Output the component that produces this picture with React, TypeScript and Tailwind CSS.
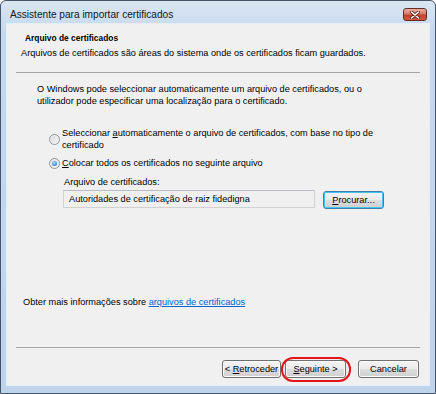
import React from "react";

const Radio = ({ checked }: { checked?: boolean }) => (
  <div className="w-[11px] h-[11px] rounded-full border border-[#8e9296] bg-[linear-gradient(135deg,#d4d6d8,#f7f7f7)] flex items-center justify-center shrink-0 shadow-[inset_0_0_0_1px_#f4f4f4]">
    {checked && (
      <div className="w-[5px] h-[5px] rounded-full bg-[radial-gradient(circle_at_40%_35%,#a8ddfb,#1b5fae)]" />
    )}
  </div>
);

const Btn = ({
  children,
  w,
  focused,
}: {
  children: React.ReactNode;
  w: string;
  focused?: boolean;
}) => (
  <div
    className={
      "h-[18px] rounded-[3px] border flex items-center justify-center bg-[linear-gradient(#f3f3f3_0%,#ebebeb_48%,#dddddd_52%,#cfcfcf_100%)] " +
      w +
      (focused
        ? " border-[#3c7fb1] shadow-[inset_0_0_0_1px_#48c4f4]"
        : " border-[#707070] shadow-[inset_0_0_0_1px_#fcfcfc]")
    }
  >
    {children}
  </div>
);

export default function App() {
  return (
    <div
      className="w-[436px] h-[394px] border border-[#46566a] rounded-t-[6px] bg-[linear-gradient(#dae6f4_0%,#c6d8ee_8%,#bed3ec_100%)] flex flex-col text-black"
      style={{ fontFamily: '"Liberation Sans", Arial, sans-serif' }}
    >
      {/* Title bar */}
      <div className="h-[23px] flex items-start justify-between">
        <div className="pl-[9px] pt-[8px] text-[10.1px] leading-[12px] text-[#101820]">
          Assistente para importar certificados
        </div>
        <div className="mt-[7px] mr-[8px] w-[24px] h-[13px] rounded-[3px] border border-[#6b2b22] bg-[linear-gradient(#eab1a4_0%,#d97a66_45%,#c4412c_55%,#cf5b40_100%)] flex items-center justify-center">
          <svg width="10" height="8" viewBox="0 0 10 8">
            <path
              d="M1.5 1 L8.5 7 M8.5 1 L1.5 7"
              stroke="#5a1d16"
              strokeWidth="3"
              strokeLinecap="round"
            />
            <path
              d="M1.5 1 L8.5 7 M8.5 1 L1.5 7"
              stroke="#ffffff"
              strokeWidth="1.6"
              strokeLinecap="round"
            />
          </svg>
        </div>
      </div>

      {/* Client area */}
      <div className="px-[6px] pb-[8px]">
        <div className="w-[422px] h-[361px] bg-[#f0f0f0] shadow-[0_0_0_1px_#e6eef8] flex flex-col text-[9.2px] leading-[12px]">
          <div className="pl-[18px] pt-[8px] font-bold text-[8.4px] leading-[12px]">
            Arquivo de certificados
          </div>
          <div className="pl-[14px] mt-[3px]">
            Arquivos de certificados são áreas do sistema onde os certificados
            ficam guardados.
          </div>
          <div className="mx-[9px] mt-[13px] h-px bg-[#a3a3a3]" />

          <div className="pl-[30px] mt-[10px]">
            O Windows pode seleccionar automaticamente um arquivo de
            certificados, ou o<br />
            utilizador pode especificar uma localização para o certificado.
          </div>

          <div className="pl-[42px] mt-[20px] flex flex-col">
            <div className="flex items-center gap-[2px]">
              <Radio />
              <div>
                Seleccionar <span className="underline">a</span>utomaticamente
                o arquivo de certificados, com base no tipo de
                <br />
                certificado
              </div>
            </div>
            <div className="flex items-center gap-[2px] mt-[6px]">
              <Radio checked />
              <div>
                <span className="underline">C</span>olocar todos os
                certificados no seguinte arquivo
              </div>
            </div>
            <div className="ml-[15px] mt-[7px]">Arquivo de certificados:</div>
            <div className="ml-[14px] mt-[2px] flex items-start gap-[8px]">
              <div className="w-[252px] h-[18px] border border-[#cfd1d4] border-t-[#b9bcc0] bg-[#f0f0f0] flex items-center pl-[5px]">
                Autoridades de certificação de raiz fidedigna
              </div>
              <div className="mt-[1px]">
                <Btn w="w-[61px]" focused>
                  <span>
                    <span className="underline">P</span>rocurar...
                  </span>
                </Btn>
              </div>
            </div>
          </div>

          <div className="pl-[16px] mt-[87px]">
            Obter mais informações sobre{" "}
            <span className="text-[#0066cc] underline">
              arquivos de certificados
            </span>
          </div>

          <div className="mx-[9px] mt-[39px] h-px bg-[#a3a3a3]" />

          <div className="mt-[12px] pr-[10px] flex justify-end items-start">
            <Btn w="w-[59px]">
              <span>
                &lt; <span className="underline">R</span>etroceder
              </span>
            </Btn>
            <div className="relative ml-[4px]">
              <Btn w="w-[61px]">
                <span>
                  <span className="underline">S</span>eguinte &gt;
                </span>
              </Btn>
              <div className="absolute left-[-4px] right-[-5px] top-[-3px] bottom-[-4px] border-2 border-[#e2141c] rounded-[12px]" />
            </div>
            <div className="ml-[12px]">
              <Btn w="w-[61px]">Cancelar</Btn>
            </div>
          </div>
        </div>
      </div>
    </div>
  );
}
